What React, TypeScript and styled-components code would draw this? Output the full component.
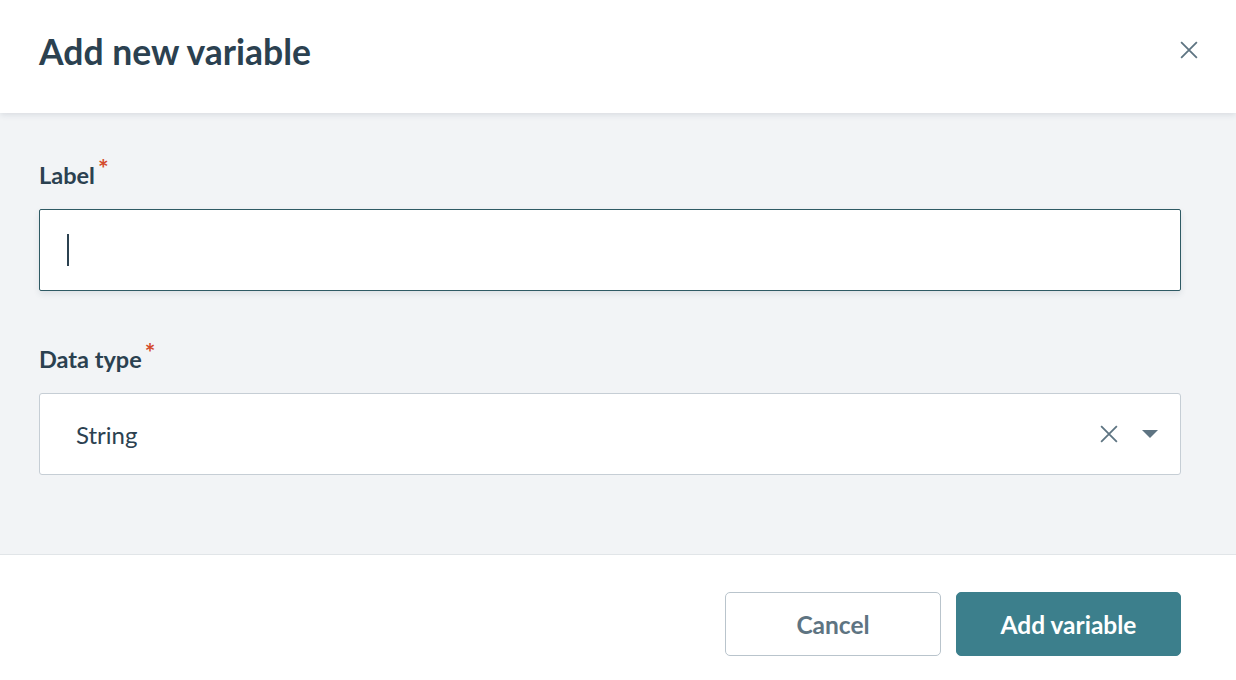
import styled, { createGlobalStyle } from 'styled-components';

const GlobalStyle = createGlobalStyle`
  html, body {
    margin: 0;
    padding: 0;
    background: #ffffff;
    font-family: Lato, "Noto Sans", sans-serif;
  }
`;

const Dialog = styled.div`
  width: 1236px;
  height: 680px;
  display: flex;
  flex-direction: column;
  background: #ffffff;
`;

const Header = styled.div`
  height: 113px;
  box-sizing: border-box;
  display: flex;
  align-items: center;
  justify-content: space-between;
  padding: 0 37px 10px 39px;
  background: #ffffff;
  box-shadow: 0 2px 6px rgba(40, 60, 80, 0.12);
  position: relative;
  z-index: 1;
`;

const Title = styled.h1`
  margin: 0;
  font-size: 35.5px;
  font-weight: 700;
  color: #2b4150;
`;

const CloseButton = styled.button`
  border: none;
  background: none;
  padding: 0;
  width: 20px;
  height: 20px;
  display: flex;
  align-items: center;
  justify-content: center;
  color: #5e7482;
  margin-top: -3px;
`;

const Body = styled.div`
  flex: 0 0 442px;
  box-sizing: border-box;
  background: #f2f4f6;
  border-bottom: 1px solid #e1e5e8;
  padding: 48px 55px 0 39px;
  display: flex;
  flex-direction: column;
`;

const Field = styled.div<{ gap?: number }>`
  display: flex;
  flex-direction: column;
  margin-bottom: ${(p) => p.gap ?? 0}px;
`;

const FieldLabel = styled.label`
  font-size: 23.5px;
  font-weight: 700;
  color: #2b4150;
  margin-bottom: 20px;
  line-height: 28px;
`;

const Required = styled.span`
  color: #d4492b;
  font-size: 25px;
  font-weight: 700;
  vertical-align: 6px;
  margin-left: 3px;
  line-height: 0;
`;

const TextInput = styled.div`
  height: 82px;
  box-sizing: border-box;
  background: #ffffff;
  border: 1px solid #2f5a64;
  border-radius: 2px;
  box-shadow: 0 3px 6px rgba(40, 60, 80, 0.1);
  display: flex;
  align-items: center;
  padding-left: 27px;
`;

const Caret = styled.span`
  display: block;
  width: 2px;
  height: 32px;
  background: #2b4150;
`;

const Select = styled.div`
  height: 82px;
  box-sizing: border-box;
  background: #ffffff;
  border: 1px solid #c6ced5;
  border-radius: 3px;
  display: flex;
  align-items: center;
  padding: 0 22px 0 36px;
`;

const SelectValue = styled.span`
  flex: 1;
  font-size: 24px;
  color: #2b4150;
`;

const SelectIcons = styled.div`
  display: flex;
  align-items: center;
  gap: 24px;
  color: #5e7482;
`;

const Footer = styled.div`
  flex: 1;
  display: flex;
  align-items: center;
  justify-content: flex-end;
  gap: 15px;
  padding: 0 55px 0 0;
  margin-top: 13px;
`;

const Button = styled.button<{ primary?: boolean }>`
  height: 64px;
  box-sizing: border-box;
  border-radius: 5px;
  font-family: Lato, "Noto Sans", sans-serif;
  font-size: 24.5px;
  font-weight: 700;
  cursor: pointer;
  border: 1px solid ${(p) => (p.primary ? '#3c7f8c' : '#b9c4cc')};
  background: ${(p) => (p.primary ? '#3c7f8c' : '#ffffff')};
  color: ${(p) => (p.primary ? '#ffffff' : '#5e7482')};
  width: ${(p) => (p.primary ? 225 : 216)}px;
`;

const CloseIcon = ({ size }: { size: number }) => (
  <svg width={size} height={size} viewBox="0 0 16 16" fill="none">
    <path d="M1 1L15 15M15 1L1 15" stroke="currentColor" strokeWidth="1.6" />
  </svg>
);

const CaretDown = () => (
  <svg width="16" height="9" viewBox="0 0 16 9">
    <path d="M0 0H16L8 8Z" fill="currentColor" />
  </svg>
);

export default function App() {
  return (
    <>
      <GlobalStyle />
      <Dialog>
        <Header>
          <Title>Add new variable</Title>
          <CloseButton>
            <CloseIcon size={18} />
          </CloseButton>
        </Header>
        <Body>
          <Field gap={54}>
            <FieldLabel>
              Label<Required>*</Required>
            </FieldLabel>
            <TextInput>
              <Caret />
            </TextInput>
          </Field>
          <Field>
            <FieldLabel>
              Data type<Required>*</Required>
            </FieldLabel>
            <Select>
              <SelectValue>String</SelectValue>
              <SelectIcons>
                <CloseIcon size={18} />
                <CaretDown />
              </SelectIcons>
            </Select>
          </Field>
        </Body>
        <Footer>
          <Button>Cancel</Button>
          <Button primary>Add variable</Button>
        </Footer>
      </Dialog>
    </>
  );
}
